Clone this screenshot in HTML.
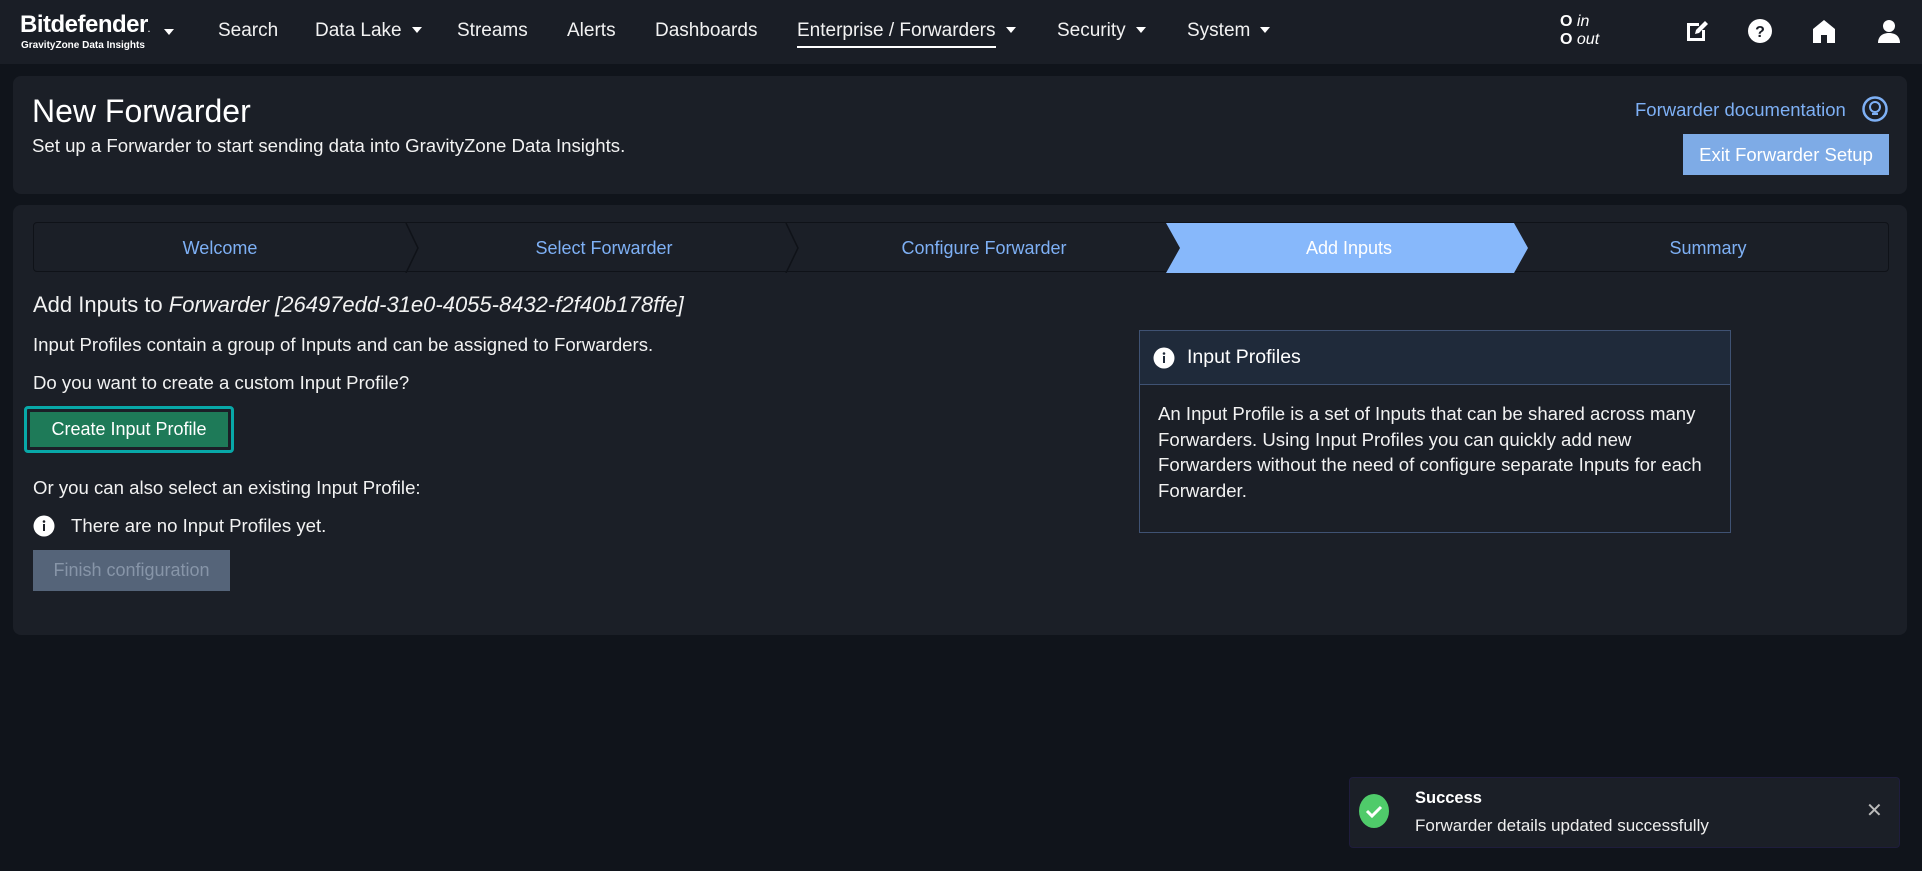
<!DOCTYPE html>
<html><head><meta charset="utf-8"><style>
*{box-sizing:border-box;margin:0;padding:0}
body{width:1922px;height:871px;background:#10141b;font-family:"Liberation Sans",sans-serif;color:#fff;position:relative;overflow:hidden}
.abs{position:absolute}
.nav{left:0;top:0;width:1922px;height:64px;background:#1a1e26}
.ni{position:absolute;top:20px;font-size:19px;color:#f2f2f2;white-space:nowrap}
.car{display:inline-block;width:0;height:0;border-left:5px solid transparent;border-right:5px solid transparent;border-top:6px solid #fff;margin-left:10px;vertical-align:3px}
.card{background:#1b1f27;border-radius:8px}
.t{position:absolute;font-size:18.6px;color:#f2f2f2;white-space:nowrap}
.step{position:absolute;top:0;height:50px;line-height:50px;text-align:center;color:#7eb0f5;font-size:18px}
</style></head><body>
<div class="abs nav">
 <div class="abs" style="left:20px;top:11px;font-size:24px;font-weight:bold;letter-spacing:-0.5px">Bitdefender<span style="font-size:8px">.</span></div>
 <div class="abs" style="left:21px;top:40px;font-size:10px;font-weight:bold">GravityZone Data Insights</div>
 <span class="car abs" style="left:164px;top:29px;margin:0"></span>
 <div class="ni" style="left:218px">Search</div>
 <div class="ni" style="left:315px">Data Lake<span class="car"></span></div>
 <div class="ni" style="left:457px">Streams</div>
 <div class="ni" style="left:567px">Alerts</div>
 <div class="ni" style="left:655px">Dashboards</div>
 <div class="ni" style="left:797px"><span style="border-bottom:2px solid #fff;padding-bottom:5px">Enterprise / Forwarders</span><span class="car"></span></div>
 <div class="ni" style="left:1057px">Security<span class="car"></span></div>
 <div class="ni" style="left:1187px">System<span class="car"></span></div>
 <div class="abs" style="left:1560px;top:13px;font-size:16px;line-height:18px;font-style:italic"><b style="font-style:normal">O</b> in<br><b style="font-style:normal">O</b> out</div>
 <svg class="abs" style="left:1684px;top:18px" width="26" height="26" viewBox="0 0 26 26"><path d="M3 5h12v3H6v12h12v-8h3v11H3z" fill="#fff"/><path d="M11 16l1-4 9-9 3 3-9 9z" fill="#fff"/></svg>
 <svg class="abs" style="left:1747px;top:18px" width="26" height="26" viewBox="0 0 26 26"><circle cx="13" cy="13" r="12" fill="#fff"/><text x="13" y="19" font-size="16" font-weight="bold" text-anchor="middle" fill="#1a1e26" font-family="Liberation Sans">?</text></svg>
 <svg class="abs" style="left:1812px;top:18px" width="24" height="26" viewBox="0 0 24 26"><path d="M12 2L1 11v14h8v-8h6v8h8V11z" fill="#fff"/></svg>
 <svg class="abs" style="left:1877px;top:18px" width="24" height="26" viewBox="0 0 24 26"><circle cx="12" cy="8" r="6" fill="#fff"/><path d="M1 25c0-7 5-10 11-10s11 3 11 10z" fill="#fff"/></svg>
</div>

<div class="abs card" style="left:13px;top:76px;width:1894px;height:118px"></div>
<div class="abs" style="left:32px;top:93px;font-size:32px">New Forwarder</div>
<div class="t" style="left:32px;top:135px;font-size:18.6px">Set up a Forwarder to start sending data into GravityZone Data Insights.</div>
<div class="abs" style="left:1635px;top:99px;font-size:18.5px;color:#7eb0f5">Forwarder documentation</div>
<svg class="abs" style="left:1862px;top:96px" width="26" height="26" viewBox="0 0 26 26"><circle cx="13" cy="13" r="11.5" fill="none" stroke="#7eb0f5" stroke-width="2.5"/><circle cx="13" cy="11" r="5" fill="none" stroke="#7eb0f5" stroke-width="2"/><path d="M10 18h6" stroke="#7eb0f5" stroke-width="2"/></svg>
<div class="abs" style="left:1683px;top:134px;width:206px;height:41px;background:#7eabe6;color:#fff;font-size:18.5px;line-height:41px;text-align:center">Exit Forwarder Setup</div>

<div class="abs card" style="left:13px;top:205px;width:1894px;height:430px"></div>
<div class="abs" style="left:33px;top:222px;width:1856px;height:50px;border:1px solid #0f1218;border-radius:4px;background:#1b1f27">
 <svg class="abs" style="left:0;top:0" width="1856" height="50"><path d="M372 0l12 25-12 25M752 0l12 25-12 25" fill="none" stroke="#0f1218" stroke-width="1.5"/><path d="M1132 0h348l14 25-14 25H1132l14-25z" fill="#87b8fb"/></svg>
 <div class="step" style="left:0;width:372px">Welcome</div>
 <div class="step" style="left:384px;width:372px">Select Forwarder</div>
 <div class="step" style="left:764px;width:372px">Configure Forwarder</div>
 <div class="step" style="left:1140px;width:350px;color:#fff">Add Inputs</div>
 <div class="step" style="left:1494px;width:360px">Summary</div>
</div>
<div class="t" style="left:33px;top:292px;font-size:22px">Add Inputs to <i>Forwarder [26497edd-31e0-4055-8432-f2f40b178ffe]</i></div>
<div class="t" style="left:33px;top:334px">Input Profiles contain a group of Inputs and can be assigned to Forwarders.</div>
<div class="t" style="left:33px;top:372px">Do you want to create a custom Input Profile?</div>
<div class="abs" style="left:24px;top:406px;width:210px;height:47px;border:3px solid #08a8a8;border-radius:4px;padding:3px"><div style="background:#1e7a58;height:35px;line-height:35px;text-align:center;font-size:18px">Create Input Profile</div></div>
<div class="t" style="left:33px;top:477px">Or you can also select an existing Input Profile:</div>
<svg class="abs" style="left:33px;top:515px" width="22" height="22" viewBox="0 0 22 22"><circle cx="11" cy="11" r="10.5" fill="#fff"/><rect x="10" y="9" width="2" height="7" fill="#1b1f27"/><circle cx="11" cy="6.5" r="1.3" fill="#1b1f27"/></svg>
<div class="t" style="left:71px;top:515px">There are no Input Profiles yet.</div>
<div class="abs" style="left:33px;top:550px;width:197px;height:41px;background:#556479;color:#8795a8;font-size:18px;line-height:41px;text-align:center">Finish configuration</div>

<div class="abs" style="left:1139px;top:330px;width:592px;height:203px;border:1px solid #3f5273">
 <div style="height:54px;background:#1f2a3a;border-bottom:1px solid #3f5273;position:relative">
  <svg class="abs" style="left:13px;top:16px" width="22" height="22" viewBox="0 0 22 22"><circle cx="11" cy="11" r="10.5" fill="#fff"/><rect x="10" y="9" width="2" height="7" fill="#1f2a3a"/><circle cx="11" cy="6.5" r="1.3" fill="#1f2a3a"/></svg>
  <div class="abs" style="left:47px;top:15px;font-size:19.5px">Input Profiles</div>
 </div>
 <div style="padding:16px 18px;font-size:18.6px;line-height:25.7px;color:#f2f2f2">An Input Profile is a set of Inputs that can be shared across many<br>Forwarders. Using Input Profiles you can quickly add new<br>Forwarders without the need of configure separate Inputs for each<br>Forwarder.</div>
</div>

<div class="abs" style="left:1349px;top:777px;width:551px;height:71px;background:#1b1f27;border:1px solid #1f1d3d;border-radius:4px">
 <svg class="abs" style="left:8px;top:15px" width="32" height="36" viewBox="0 0 32 36"><ellipse cx="16" cy="18" rx="15" ry="17" fill="#4fcb6a"/><path d="M9 18l5 5 9-9" fill="none" stroke="#fff" stroke-width="3"/></svg>
 <div class="abs" style="left:65px;top:11px;font-size:16.5px;font-weight:bold">Success</div>
 <div class="abs" style="left:65px;top:38px;font-size:17px;color:#eee">Forwarder details updated successfully</div>
 <div class="abs" style="left:516px;top:20px;font-size:20px;color:#bbb">✕</div>
</div>
</body></html>
